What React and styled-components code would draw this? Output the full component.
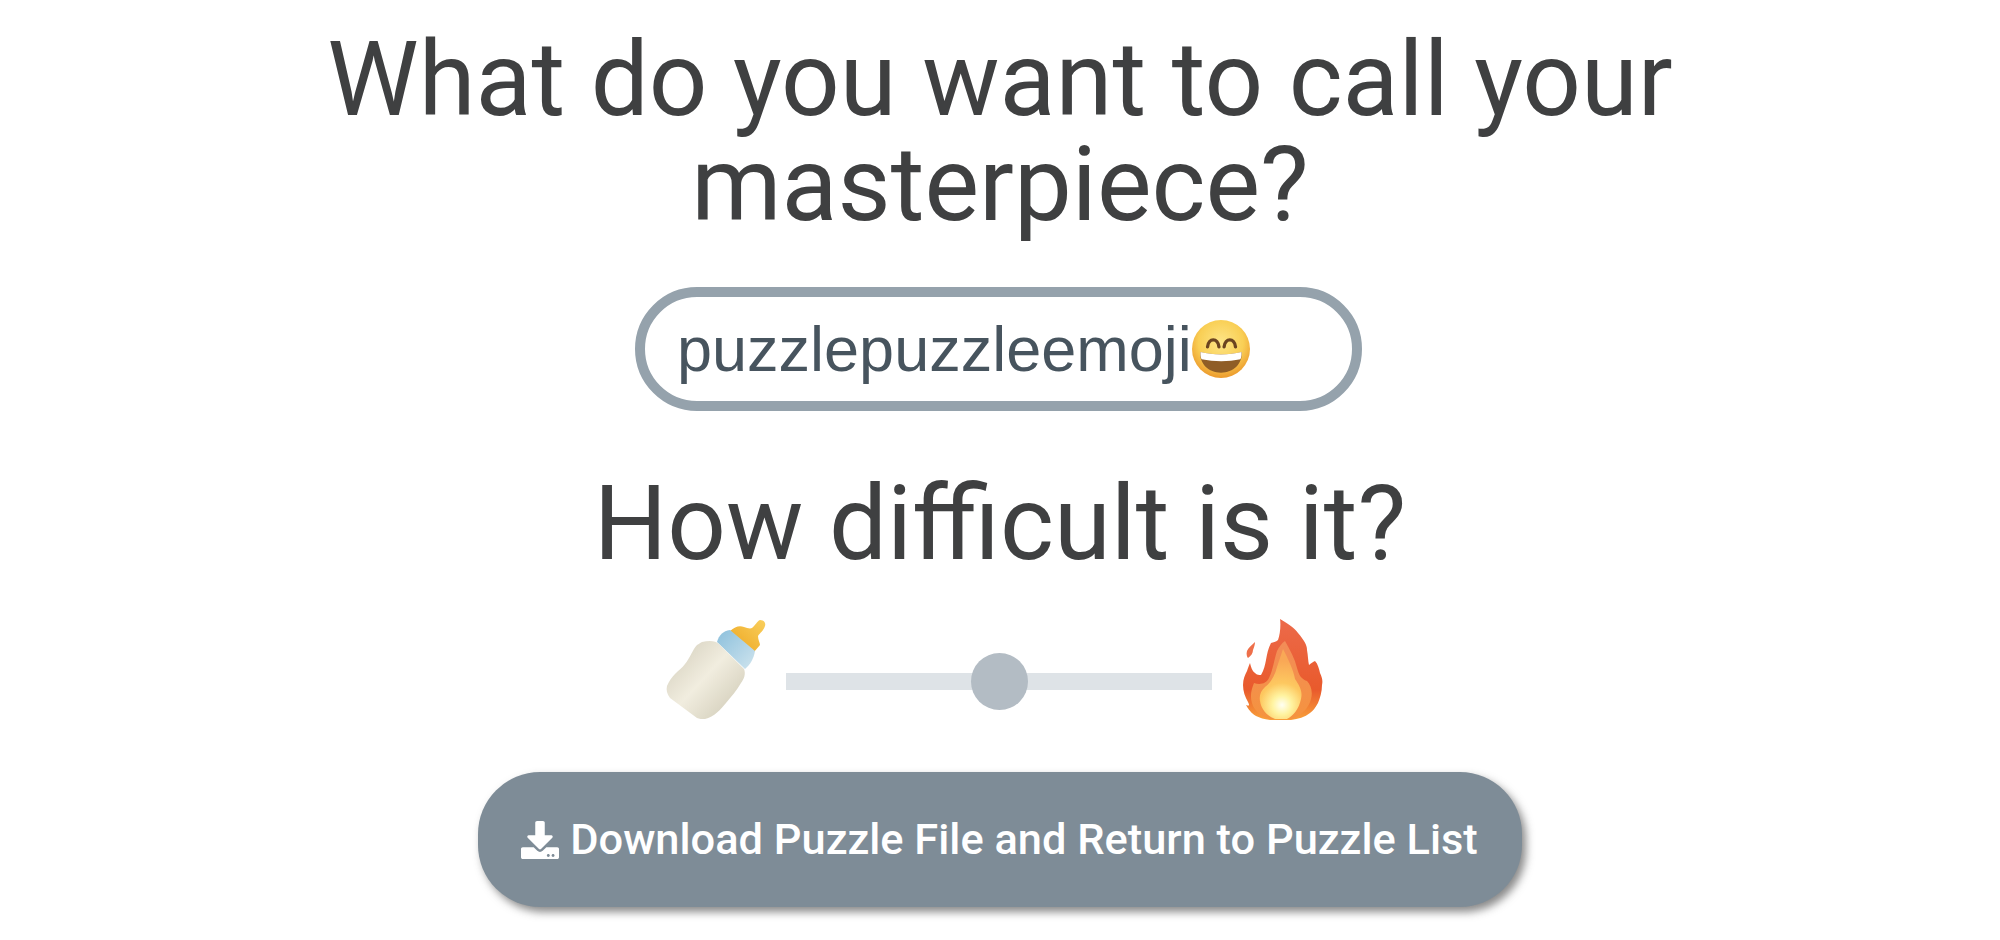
import React from 'react'
import styled, { createGlobalStyle } from 'styled-components'
import { FaDownload } from 'react-icons/fa'

const GlobalStyle = createGlobalStyle`
  html, body {
    margin: 0;
    padding: 0;
    background: #fff;
  }
`

const Grin = () => (
  <EmojiSvg width="58" height="58" viewBox="0 0 56 56">
    <defs>
      <radialGradient id="grinFace" cx="50%" cy="38%" r="62%">
        <stop offset="0%" stopColor="#fde587" />
        <stop offset="62%" stopColor="#f9cf55" />
        <stop offset="100%" stopColor="#ec9a2c" />
      </radialGradient>
    </defs>
    <circle cx="28" cy="28" r="28" fill="url(#grinFace)" />
    <path d="M15 26c1-9 10-9 11 0M31 26c1-9 10-9 11 0" fill="none" stroke="#6b4420" strokeWidth="3.200" strokeLinecap="round" />
    <path d="M8 31c12 3 28 3 40 0 1 11-8 20-20 20S7 42 8 31z" fill="#8f5d26" />
    <path d="M8.200 31c12 3 27.600 3 39.600 0 .2 3-.2 5-1 7-12 2.500-25 2.500-37.600 0-.8-2-1.200-4-1-7z" fill="#fff" />
  </EmojiSvg>
)

const Bottle = () => (
  <EmojiSvg width="98" height="99" viewBox="0 0 98 99">
    <defs>
      <linearGradient id="milk" x1="15%" y1="20%" x2="85%" y2="85%">
        <stop offset="0%" stopColor="#dcd7c6" />
        <stop offset="45%" stopColor="#f1eddf" />
        <stop offset="100%" stopColor="#d6d1be" />
      </linearGradient>
      <linearGradient id="collar" x1="0%" y1="0%" x2="100%" y2="100%">
        <stop offset="0%" stopColor="#8cc0dc" />
        <stop offset="100%" stopColor="#cfe4ee" />
      </linearGradient>
      <linearGradient id="teat" x1="0%" y1="100%" x2="100%" y2="0%">
        <stop offset="0%" stopColor="#eda51f" />
        <stop offset="100%" stopColor="#f9cf5d" />
      </linearGradient>
    </defs>
    <path d="M63 11C68 7 72 5 77 7 80 8 83 9 85 8 88 6 90 1 93 0 97 0 99 3 98 6 97 10 93 13 91 16 91 20 93 23 93 25L87 32 63 11z" fill="url(#teat)" />
    <path d="M50 22C52 15 56 11 63 10L88 31C87 38 83 45 78 49L50 22z" fill="url(#collar)" />
    <path d="M35 22C43 20 49 21 52 24L77 49C79 54 77 59 74 63 70 70 64 77 59 83 54 89 47 97 38 99 35 99 32 99 30 98L3 78C0 74-1 70 0 66 2 61 5 57 8 54 12 50 15 48 18 44 23 38 26 29 30 25 32 24 33 23 35 22z" fill="url(#milk)" />
  </EmojiSvg>
)

const Flame = () => (
  <EmojiSvg width="80" height="101" viewBox="0 0 80 101">
    <defs>
      <radialGradient id="flameCore" gradientUnits="userSpaceOnUse" cx="39" cy="86" r="44">
        <stop offset="0%" stopColor="#fffff2" />
        <stop offset="22%" stopColor="#fff3a0" />
        <stop offset="50%" stopColor="#fdc860" />
        <stop offset="100%" stopColor="#f9a856" />
      </radialGradient>
      <linearGradient id="flameMid" x1="0%" y1="0%" x2="0%" y2="100%">
        <stop offset="0%" stopColor="#f28c58" />
        <stop offset="100%" stopColor="#f5933f" />
      </linearGradient>
      <linearGradient id="flameEdge" x1="0%" y1="0%" x2="0%" y2="100%">
        <stop offset="0%" stopColor="#ec6a4a" />
        <stop offset="70%" stopColor="#e95a2c" />
        <stop offset="100%" stopColor="#f8a03a" />
      </linearGradient>
    </defs>
    <path d="M12 23C9 26 5 29 4 32 3 35 4 38 5 39 8 37 10 34 10 31 11 28 12 26 12 23z" fill="#ee6f4a" />
    <path d="M37 0C45 5 52 9 55 14 61 21 64 26 64 31 65 36 65 42 66 46 68 44 70 43 72 42 75 45 76 50 77 54 79 58 80 62 79 66 79 73 77 79 75 84 72 89 70 92 67 94 62 98 55 100 48 101H27C21 100 17 99 13 97 10 95 7 93 3 86 6 87 7 87 5 83 2 78 0 72 0 66 0 60 2 56 4 52 5 49 6 46 7 44 8 48 9 52 12 54 14 56 16 56 18 56 21 51 22 46 23 41 24 35 25 30 28 24 30 23 33 23 35 21 37 16 38 6 37 0z" fill="url(#flameEdge)" />
    <path d="M34 32C36 28 39 24 42 22 47 31 52 40 54 49 56 56 58 60 64 62 68 66 70 73 68 80 66 88 60 95 50 100H27C19 98 11 92 9 84 7 78 8 71 11 64 17 66 23 65 26 59 30 51 31 41 34 32z" fill="url(#flameMid)" />
    <path d="M40 30C46 42 50 50 52 60 56 66 60 72 58 80 56 90 50 97 44 100H32C24 97 18 90 17 82 16 76 18 72 22 68 28 64 32 56 34 48 36 42 38 36 40 30z" fill="url(#flameCore)" />
  </EmojiSvg>
)

const App = () => {
  return (
    <>
      <GlobalStyle />
      <Page>
        <Heading $first>What do you want to call your masterpiece?</Heading>
        <NameField>
          puzzlepuzzleemoji
          <Grin />
        </NameField>
        <Heading>How difficult is it?</Heading>
        <SliderRow>
          <Bottle />
          <Slider type="range" min="0" max="100" defaultValue="50" />
          <Flame />
        </SliderRow>
        <DownloadButton>
          <FaDownload />
          Download Puzzle File and Return to Puzzle List
        </DownloadButton>
      </Page>
    </>
  )
}

export default App

const Page = styled.div`
  width: 100%;
  height: 940px;
  overflow: hidden;
  display: flex;
  flex-direction: column;
  align-items: center;
  background: #fff;
  font-family: Roboto, sans-serif;
`

const EmojiSvg = styled.svg`
  flex: none;
  overflow: visible;
  filter: blur(0.6px);
`

const Heading = styled.h1`
  margin: ${p => (p.$first ? '27px 0 0' : '60px 0 0')};
  width: 1400px;
  text-align: center;
  font-size: 103px;
  line-height: 105px;
  font-weight: 400;
  color: #3f4041;
`

const NameField = styled.div`
  box-sizing: border-box;
  margin: 50px 3px 0 0;
  width: 727px;
  height: 124px;
  padding: 0 0 0 32px;
  display: flex;
  align-items: center;
  border: 10px solid #95a2ac;
  border-radius: 62px;
  background: #fff;
  font-family: "Liberation Sans", Arial, sans-serif;
  font-size: 63px;
  color: #47545e;
`

const SliderRow = styled.div`
  margin-top: 43px;
  padding-right: 10px;
  display: flex;
  align-items: center;
  gap: 21px;
  height: 101px;
`

const Slider = styled.input`
  appearance: none;
  margin: 24px 10px 0 0;
  width: 426px;
  height: 17px;
  background: #dee3e7;
  outline: none;

  &::-webkit-slider-thumb {
    appearance: none;
    width: 57px;
    height: 57px;
    border-radius: 50%;
    background: #b3bcc4;
  }
`

const DownloadButton = styled.button`
  margin: 52px 1px 0 0;
  width: 1044px;
  height: 135px;
  display: flex;
  align-items: center;
  justify-content: center;
  gap: 11px;
  border: none;
  border-radius: 62px;
  background: #7e8c97;
  box-shadow: 4px 5px 8px rgba(60, 60, 60, 0.6);
  color: #fff;
  font-family: Roboto, sans-serif;
  font-size: 43.4px;
  font-weight: 500;

  svg {
    width: 38px;
    height: 38px;
    filter: none;
  }
`
